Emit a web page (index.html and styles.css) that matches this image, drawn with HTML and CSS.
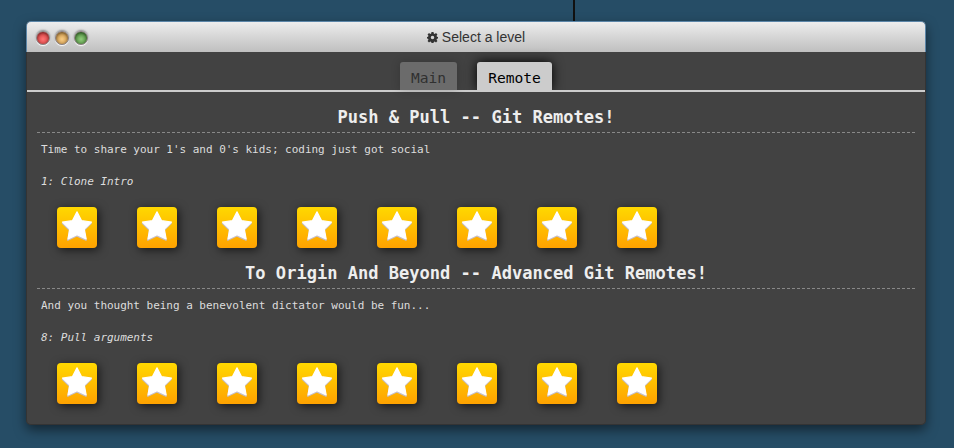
FILE: index.html
```html
<!DOCTYPE html>
<html lang="en">
<head>
<meta charset="utf-8">
<title>Select a level</title>
<link rel="stylesheet" href="styles.css">
</head>
<body>
<div class="cursor-line"></div>
<main class="window">
  <header class="titlebar">
    <div class="buttons"><i class="dot red"></i><i class="dot yellow"></i><i class="dot green"></i></div>
    <div class="title">
      <svg class="gear" viewBox="0 0 22 22"><path fill="#333" fill-rule="evenodd" d="M9 0h4l.6 3 1.800.8L18 2.100l2.900 2.900-1.800 2.600.8 1.800 2.100.6v3l-2.100.6-.8 1.800 1.800 2.600L18 20.900l-2.600-1.700-1.800.8L13 22H9l-.6-2-1.800-.8L4 20.900 1.100 18l1.800-2.600-.8-1.800L0 13v-3l2.100-.6.8-1.800L1.100 5 4 2.100l2.600 1.700L8.400 3zM11 7.500a3.500 3.500 0 1 0 0 7 3.500 3.500 0 0 0 0-7z"/></svg>
      <span>Select a level</span>
    </div>
  </header>
  <nav class="tabs"><span class="tab main">Main</span><span class="tab active">Remote</span></nav>
  <section class="series">
    <h2>Push &amp; Pull -- Git Remotes!</h2>
    <p class="about">Time to share your 1's and 0's kids; coding just got social</p>
    <p class="level-name">1: Clone Intro</p>
    <div class="levels"></div>
  </section>
  <section class="series">
    <h2>To Origin And Beyond -- Advanced Git Remotes!</h2>
    <p class="about">And you thought being a benevolent dictator would be fun...</p>
    <p class="level-name">8: Pull arguments</p>
    <div class="levels"></div>
  </section>
</main>
<script src="levels.js"></script>
</body>
</html>
```
FILE: styles.css
```css
* { box-sizing: border-box; }
body {
  margin: 0;
  height: 448px;
  padding: 21px 28px 0 26px;
  overflow: hidden;
  background: #264d66;
  font-family: "DejaVu Sans Mono", monospace;
}
.cursor-line {
  position: absolute;
  left: 573px;
  top: 0;
  width: 2px;
  height: 21px;
  background: #111;
}
.window {
  position: relative;
  width: 900px;
  height: 404px;
  border-radius: 5px;
  background: #424242;
  box-shadow: inset 0 0 0 1px #343434, 0 5px 12px rgba(0, 0, 0, .5);
}
.titlebar {
  position: relative;
  height: 31px;
  display: flex;
  align-items: center;
  justify-content: center;
  border: 1px solid #5c86a8;
  border-bottom: 0;
  border-radius: 5px 5px 0 0;
  background: linear-gradient(#ededed, #bfbfbf);
}
.buttons {
  position: absolute;
  left: 9px;
  top: 9px;
  display: flex;
  gap: 5px;
}
.dot {
  width: 14px;
  height: 14px;
  border-radius: 50%;
  border: 1px solid #8b8080;
  box-shadow: 0 1px 1px #fff, 0 -1px 2px rgba(0, 0, 0, .4), inset 0 1px 3px rgba(0, 0, 0, .5);
}
.red { background: radial-gradient(circle at 50% 60%, #ff7474, #d33f3f 75%); }
.yellow { background: radial-gradient(circle at 50% 60%, #f7cb83, #c99549 75%); }
.green { background: radial-gradient(circle at 50% 60%, #91cb7b, #4d8d3c 75%); }
.title {
  display: flex;
  align-items: center;
  gap: 4px;
  font: 14px/20px "Liberation Sans", Arial, sans-serif;
  color: #333;
}
.gear { width: 11px; height: 11px; }
.tabs {
  height: 40px;
  margin: 0 1px;
  padding-top: 10px;
  display: flex;
  justify-content: center;
  gap: 20px;
  border-bottom: 2px solid #ccc;
}
.tab {
  width: 75px;
  height: 28px;
  border-radius: 3px 3px 0 0;
  font-size: 14.6px;
  line-height: 31px;
  text-align: center;
  background: #ccc;
  color: #000;
}
.tab.main {
  width: 57px;
  background: #6b6b6b;
  color: #303030;
  box-shadow: 0 0 10px rgba(0, 0, 0, .2);
}
.tab.active { box-shadow: 0 0 12px #000; clip-path: inset(-14px -16px 0 -16px); }
.series {
  height: 156px;
  padding: 10px 11px 0;
}
h2 {
  height: 31px;
  margin: 0;
  border-bottom: 1px dashed #888;
  font-size: 17.06px;
  line-height: 30px;
  text-align: center;
  color: #eee;
}
.about, .level-name {
  margin: 0;
  padding-left: 4px;
  height: 32px;
  font-size: 11px;
  line-height: 34px;
  letter-spacing: -.025px;
  color: #ddd;
}
.level-name { font-style: italic; }
.levels {
  display: flex;
  gap: 40px;
  padding: 10px 20px 0;
}
.level {
  width: 40px;
  height: 41px;
  border-radius: 4px;
  background: linear-gradient(#ffd800, #ffa200);
  box-shadow: 2px 2px 10px rgba(0, 0, 0, .65);
}
.level svg { display: block; width: 40px; height: 41px; }
.star-shadow { fill: #c5bfcb; stroke: #c5bfcb; stroke-width: 1.200; stroke-linejoin: round; }
.star { fill: #fff; stroke: #fff; stroke-width: 1.200; stroke-linejoin: round; }
```
FILE: levels.js
```js
const points = "20,4.800 24.600,13.700 34.500,15 27.300,22 29.200,32 20,27.600 11,32 12.700,22 5.500,15 15.400,13.700";
const tile = `<div class="level"><svg viewBox="0 0 40 41"><polygon class="star-shadow" transform="translate(-.2 1.300)" points="${points}"/><polygon class="star" points="${points}"/></svg></div>`;
document.querySelectorAll(".levels").forEach(row => { row.innerHTML = tile.repeat(8); });
```
